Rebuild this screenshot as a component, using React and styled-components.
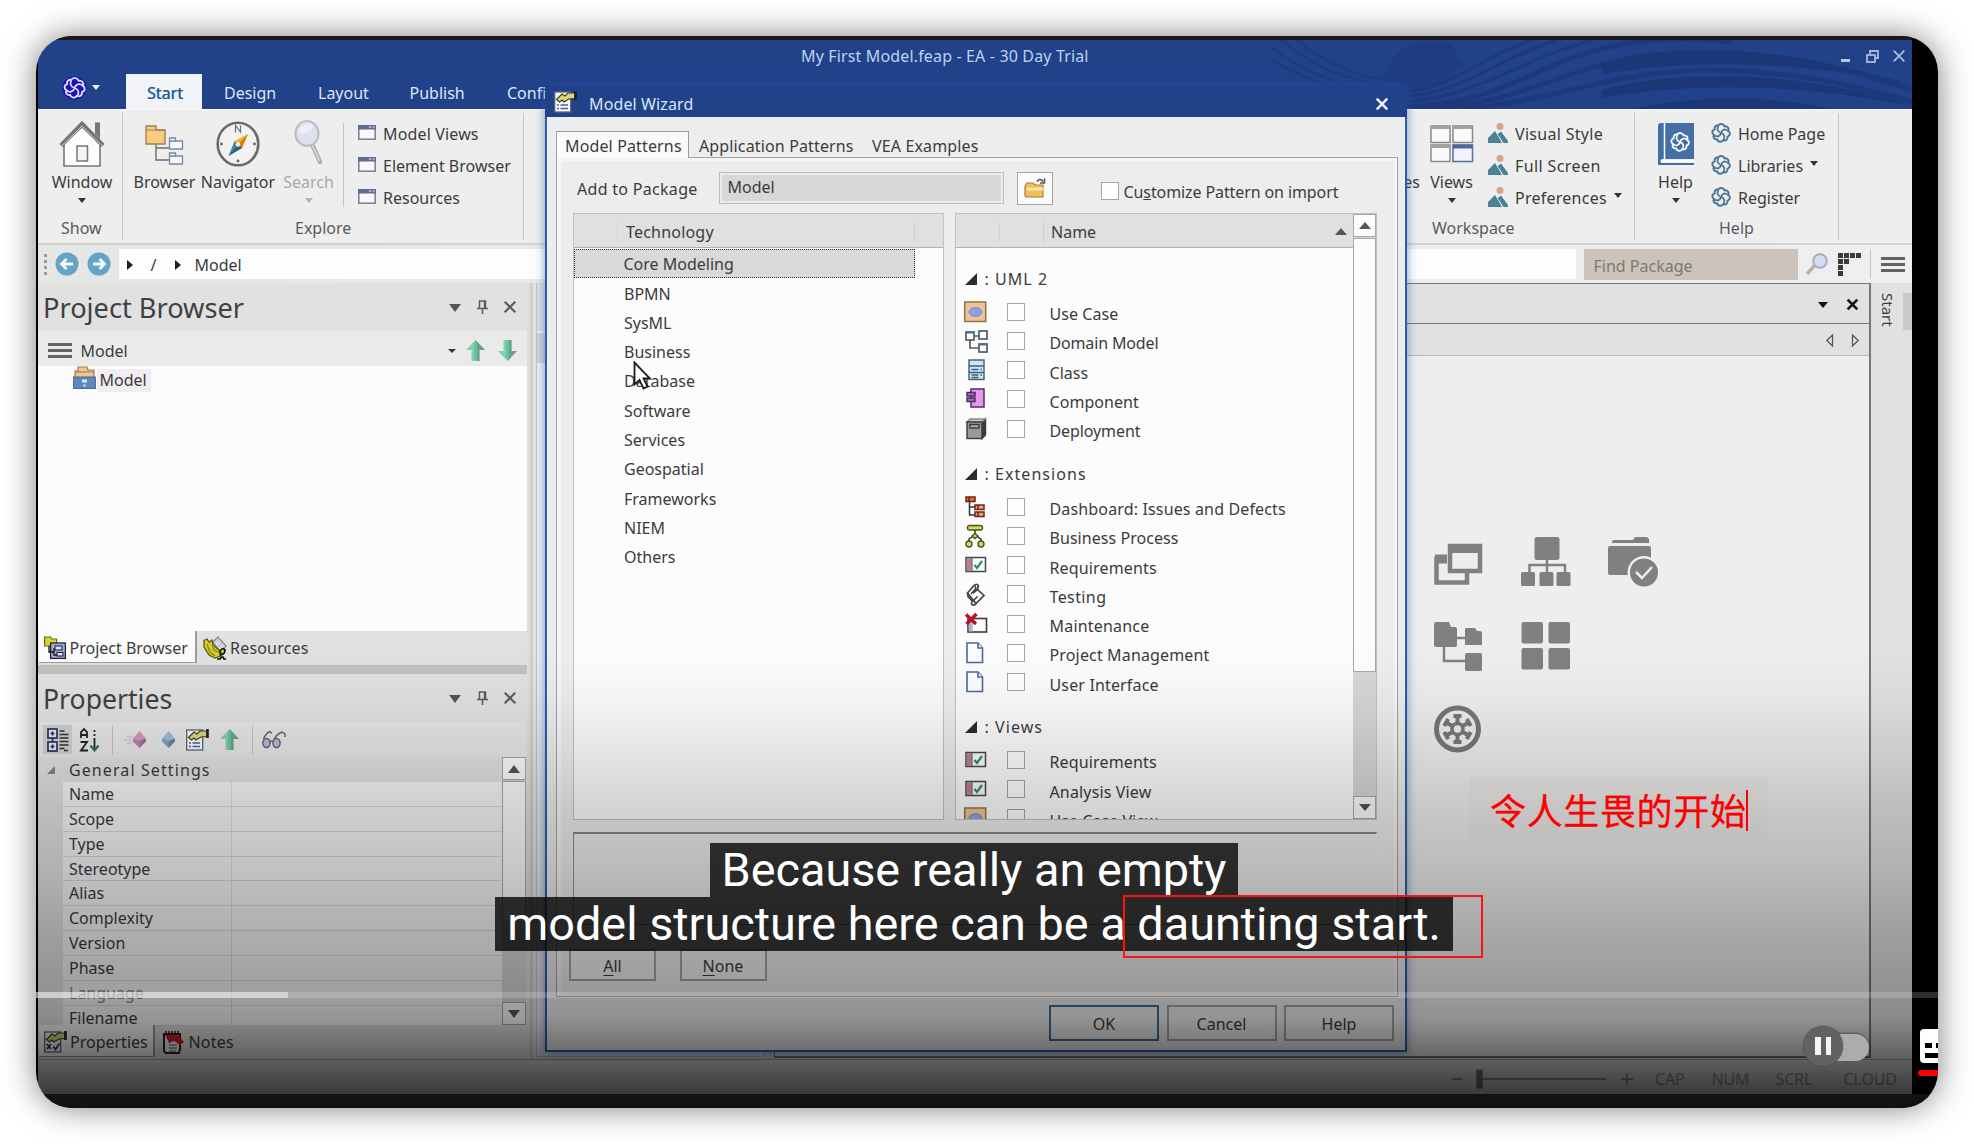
import React from "react";
import styled, { createGlobalStyle } from "styled-components";

const Global = createGlobalStyle`
  * { box-sizing: border-box; }
  html, body { margin: 0; background: #fff; }
  body {
    width: 1974px; height: 1144px; overflow: hidden;
    font-family: "Noto Sans", "Noto Sans CJK SC", sans-serif;
    font-size: 16px; line-height: 24px; color: #3b3b3d;
  }
`;

/* ---------- player frame ---------- */
const Page = styled.div`
  width: 1974px; height: 1144px; padding: 36px; overflow: hidden;
`;
const Shadow = styled.div`
  border-radius: 36px; width: 1902px; height: 1072px;
  box-shadow: 0 0 32px rgba(0, 0, 0, 0.5);
`;
const Player = styled.div`
  position: relative; width: 1902px; height: 1072px; overflow: hidden;
  border-radius: 36px; background: #000; display: flex; flex-direction: column;
`;
const TopStrip = styled.div`height: 4px; flex: none; background: #19191b; margin-right: 26px;`;
const BottomStrip = styled.div`height: 14px; flex: none; background: #121212;`;
const Screen = styled.div`
  position: relative; flex: none; margin-left: 2px; width: 1874px; height: 1054px;
  background: #eee; display: flex; flex-direction: column; overflow: hidden;
`;
const Shade = styled.div`
  position: absolute; left: 0; right: 0; top: 600px; height: 454px; pointer-events: none;
  background: linear-gradient(rgba(0,0,0,0) 0, rgba(0,0,0,0.01) 30px, rgba(0,0,0,0.04) 65px,
    rgba(0,0,0,0.1) 120px, rgba(0,0,0,0.155) 165px, rgba(0,0,0,0.205) 220px, rgba(0,0,0,0.3) 300px,
    rgba(0,0,0,0.36) 360px, rgba(0,0,0,0.39) 378px, rgba(0,0,0,0.47) 396px, rgba(0,0,0,0.61) 425px, rgba(0,0,0,0.75) 454px);
`;

/* ---------- shared bits ---------- */
const Svg = styled.svg`display: block; flex: none; overflow: visible;`;
const Text = styled.span`
  white-space: pre; letter-spacing: ${(p) => p.$ls || 0}px; color: ${(p) => p.$color || "inherit"};
`;
const Tri = styled.i`
  display: block; flex: none; width: 0; height: 0;
  border-left: ${(p) => p.$s || 4}px solid transparent;
  border-right: ${(p) => p.$s || 4}px solid transparent;
  ${(p) => (p.$up ? "border-bottom" : "border-top")}: ${(p) => p.$h || 5}px solid ${(p) => p.$c || "#333"};
  margin-top: ${(p) => p.$mt || 0}px;
`;
const VLine = styled.i`
  display: block; flex: none; width: 1px; height: ${(p) => p.$h}px; background: ${(p) => p.$c || "#c4c4c4"};
  margin: ${(p) => p.$m || 0};
`;
const Gap = styled.i`display: block; flex: ${(p) => (p.$w ? "none" : 1)}; width: ${(p) => p.$w || 0}px;`;
const Burger = styled.i`
  display: block; flex: none; width: 24px; height: 15px;
  background: linear-gradient(#626262 0 3px, transparent 3px 6px, #626262 6px 9px, transparent 9px 12px, #626262 12px);
`;

const Knot = ({ w = 20, h = 20, c = "#4d7296", bg = "none", sw = 2 }) => (
  <Svg width={w} height={h} viewBox="0 0 20 20" preserveAspectRatio="none" fill="none" stroke={c} strokeWidth={sw}>
    {bg !== "none" && <circle cx="10" cy="10" r="10.5" fill={bg} stroke="none" />}
    <path d="M7 2.500C9 .2 12.600.6 13.600 3.400 16.600 3 18.400 5.400 17.300 8 19.800 9.800 19.200 12.800 16.600 13.600 16.800 16.800 14.400 18.200 12.200 17.200 10.200 19.800 7 19 6.200 16.400 3.200 16.800 1.800 14.200 3 12 .4 10.200 1 7.200 3.600 6.400 3.200 3.800 4.800 2.200 7 2.500Z" />
    <path d="M10 10C6.500 9 5.500 5.500 7.500 3M10 10C11 6.500 14.500 5.500 17 7.800M10 10C13.500 11 14.500 14.500 12.300 17M10 10C9 13.500 5.500 14.500 3 12.200" strokeWidth={sw * 0.9} />
  </Svg>
);

/* ---------- title bar ---------- */
const Head = styled.div`
  position: relative; height: 69px; flex: none; background: #214189; color: #c9d8f4;
`;
const Waves = styled.svg`position: absolute; right: 0; top: 0;`;
const TitleRow = styled.div`
  position: relative; display: flex; align-items: center; height: 34px; padding: 0 7px 2px 0;
`;
const AppTitle = styled.div`margin-left: 763px; margin-right: auto; color: #bfd2f2; letter-spacing: 0.150px;`;
const WinButtons = styled.div`
  display: flex; gap: 14px; align-items: center;
  & > svg:first-child { margin-right: 2px; }
`;
const TabRow = styled.div`position: relative; display: flex; height: 35px;`;
const LogoButton = styled.div`
  width: 88px; padding: 3px 0 0 25px; display: flex; gap: 6px;
  & > i { margin-top: 8px; }
`;
const RibbonTab = styled.div`
  width: ${(p) => p.$w}px; padding: 7px 0 0 ${(p) => p.$pl}px; color: #dbe6fa; white-space: pre;
  ${(p) => p.$active && "background: #f1f3f6; color: #1e5f9f; text-shadow: 0.3px 0 #1e5f9f;"}
`;

/* ---------- ribbon ---------- */
const Ribbon = styled.div`
  display: flex; height: 136px; flex: none; background: #eeeeee; border-top: 1px solid #fafafa;
  border-bottom: 2px solid #d2d2d2; padding-top: 3px;
`;
const Group = styled.div`
  width: ${(p) => p.$w}px; height: 127px; flex: none; border-right: 1px solid #c6c6c6;
  display: flex; flex-direction: column;
`;
const GroupBody = styled.div`display: flex; height: 103px; padding-left: ${(p) => p.$pl || 0}px;`;
const GroupName = styled.div`
  color: #5a5a5c; line-height: 24px; padding-left: ${(p) => p.$pl}px; white-space: pre;
`;
const Big = styled.div`
  width: ${(p) => p.$w}px; display: flex; flex-direction: column; align-items: center; flex: none;
  color: ${(p) => p.$color || "inherit"};
  & > div { height: 57px; display: flex; align-items: flex-start; padding-top: ${(p) => p.$pt ?? 8}px; }
  & > span { white-space: pre; line-height: 24px; }
  & > i { margin-top: 4px; }
`;
const SmallList = styled.div`
  display: flex; flex-direction: column; padding: 5px 0 0 ${(p) => p.$pl}px;
`;
const Small = styled.div`
  display: flex; height: 32px; align-items: center; gap: ${(p) => p.$gap || 7}px; white-space: pre;
  letter-spacing: ${(p) => p.$ls || 0}px;
  & > svg { margin-top: -3px; }
`;

const House = () => (
  <Svg width="46" height="46" viewBox="0 0 46 46">
    <path d="M5 22V45H41V22L23 6Z" fill="#fdfdfd" stroke="#777" strokeWidth="1.600" />
    <path d="M36 1.500h5V18l-5-5z" fill="#777" />
    <path d="M2 24.500 23 3 44 24.500" fill="none" stroke="#747474" strokeWidth="4.500" />
    <path d="M2 25.500 23 5 44 25.500" fill="none" stroke="#d8d8d8" strokeWidth="0.900" />
    <rect x="18" y="25" width="10.500" height="15" fill="#f4f4f4" stroke="#777" strokeWidth="1.500" />
  </Svg>
);
const BrowserIcon = () => (
  <Svg width="39" height="40" viewBox="0 0 39 40" fill="none">
    <path d="M11 18v17h13M11 23h13" stroke="#6d6d6d" strokeWidth="1.400" />
    <path d="M1 1h10v4h9v14H1z" fill="#fbc980" stroke="#a08050" strokeWidth="1.400" />
    <path d="M1 5h19" stroke="#a08050" />
    <g fill="#f8f9fc" stroke="#7687a5" strokeWidth="1.300">
      <path d="M24.500 13h6v3h7v8h-13z" /><path d="M24.500 28h6v3h7v8h-13z" /><path d="M24.500 16h6M24.500 31h6" />
    </g>
  </Svg>
);
const Compass = () => (
  <Svg width="44" height="46" viewBox="0 0 44 46">
    <ellipse cx="22" cy="23" rx="20.300" ry="21.300" fill="#f2f2f2" stroke="#6a6a6a" strokeWidth="2.600" />
    <path d="M19.500 11.500V4.500L24.500 11V4.500" fill="none" stroke="#6d6d6d" strokeWidth="1.200" />
    <path d="M32 13 18.500 20 26 27z" fill="#f5b32d" /><path d="M32 13 22 23.500 26 27z" fill="#d97b16" />
    <path d="M12.500 35 18.500 20 26 27z" fill="#3f88a0" /><path d="M12.500 35 22 23.500 26 27z" fill="#2c6478" />
    <circle cx="22" cy="23.500" r="2.200" fill="#e8f0f2" />
    <g fill="#666"><circle cx="5.500" cy="23" r="1.400" /><circle cx="38.500" cy="23" r="1.400" /><circle cx="22" cy="40" r="1.400" /></g>
  </Svg>
);
const Magnifier = () => (
  <Svg width="29" height="45" viewBox="0 0 29 45">
    <path d="M18 24 26 42" stroke="#b0b0b2" strokeWidth="4.500" strokeLinecap="round" />
    <path d="M18.500 25.500 25.500 41" stroke="#dedede" strokeWidth="1.500" />
    <ellipse cx="13" cy="13.500" rx="11.500" ry="12.500" fill="#dde1f0" stroke="#bdbdc4" strokeWidth="2.200" />
    <path d="M4 13c2-8 10-11 15-7-2 5-8 8-15 7z" fill="#eef0f9" />
  </Svg>
);
const WinIcon = () => (
  <Svg width="18" height="15" viewBox="0 0 18 15">
    <rect x="0.800" y="0.800" width="16.400" height="13.400" fill="#f9f9fb" stroke="#7a7c82" strokeWidth="1.500" />
    <rect x="0" y="0" width="18" height="4.500" fill="#5f6f92" /><path d="M11 2h2M14.500 2h2" stroke="#fff" />
  </Svg>
);
const ViewsIcon = () => (
  <Svg width="44" height="38" viewBox="0 0 44 38" fill="#fafafa" stroke="#8a8a8a" strokeWidth="1.500">
    <rect x="1" y="1" width="19" height="16.500" /><rect x="23" y="1" width="19.500" height="16.500" />
    <rect x="1" y="20" width="19" height="16.500" /><rect x="23" y="20" width="19.500" height="16.500" fill="#f2f3fc" stroke="#5b6f97" />
    <path d="M1 2.500h19M23 2.500h19.500M1 21.500h19" strokeWidth="3" stroke="#a2a2a2" /><path d="M23 21.500h19.500" strokeWidth="4" stroke="#4c6a9e" />
  </Svg>
);
const PersonIcon = () => (
  <Svg width="20" height="20" viewBox="0 0 20 20">
    <circle cx="12" cy="3.500" r="3.500" fill="#dba282" />
    <path d="M0 20V15L7 8l7 12z" fill="#4c8194" /><path d="M9.500 11 13 8.500 20 18v2h-4.500z" fill="#4c8194" />
  </Svg>
);
const BookIcon = () => (
  <Svg width="36" height="42" viewBox="0 0 36 42">
    <path d="M3 0H36V36H4q-1 0-1 1.200V40h33v2H0V3q0-3 3-3z" fill="#436fa6" />
    <path d="M6.500 0V36M2.500 38H36" stroke="#fff" strokeWidth="1.500" />
    <g transform="translate(12 9)"><Knot w="20" h="20" c="#fff" sw={1.800} /></g>
  </Svg>
);

/* ---------- address bar ---------- */
const Address = styled.div`
  display: flex; align-items: center; height: 38px; flex: none; background: linear-gradient(90deg, #e6e6e6, #efefef);
`;
const Grip = styled.i`
  width: 3px; height: 21px; margin: 0 8px 0 5.500px;
  background: repeating-linear-gradient(#9a9a9a 0 3px, transparent 3px 6px);
`;
const Crumbs = styled.div`
  height: 30px; width: 1457px; background: #fdfdfd; display: flex; align-items: center; margin-left: 8px; padding: 1px 0 0 8px;
`;
const Right = styled.i`
  width: 0; height: 0; border: 5.500px solid transparent; border-left: 6px solid #1e1e1e; border-right: 0;
`;
const Find = styled.div`
  width: 214px; height: 31px; background: #cbc4bb; color: #7d7973; margin-left: 8px; padding: 5px 10px;
`;
const RoundArrow = ({ flip }) => (
  <Svg width="24" height="24" viewBox="0 0 24 24">
    <circle cx="12" cy="12" r="11.500" fill="#65a4c5" />
    <g transform={flip ? "translate(24 0) scale(-1 1)" : undefined}>
      <path d="M18 12H7M11.500 7 6.500 12l5 5" fill="none" stroke="#f2f8fb" strokeWidth="2.800" />
    </g>
  </Svg>
);

/* ---------- panels ---------- */
const Body = styled.div`display: flex; height: 776px; flex: none; background: #e0e0e0;`;
const Side = styled.div`width: 489px; flex: none; display: flex; flex-direction: column; background: #e1e1e1;`;
const PanelHead = styled.div`
  height: ${(p) => p.$h}px; flex: none; display: flex; align-items: center; padding: 0 11px 0 5px; color: #404042;
  & > h2 { font-weight: 400; font-size: ${(p) => p.$fs}px; line-height: 40px; margin: 1px auto 0 0; }
`;
const PanelTools = styled.div`display: flex; align-items: center; gap: 16px;`;
const Bar = styled.div`
  height: 35px; flex: none; background: #eaeaea; display: flex; align-items: center; padding: 4px 10px 0 10px;
`;
const Tree = styled.div`height: 265px; flex: none; background: #fcfcfc; padding-left: 35px; display: flex; align-items: flex-start;`;
const TreeLabel = styled.span`background: #f0eef1; margin: 3px 0 0 1px; padding: 0 4px 0 2.500px; line-height: 23px;`;
const Tabs = styled.div`height: 34px; flex: none; display: flex; padding-left: 1px;`;
const SideTab = styled.div`
  height: 32px; width: ${(p) => p.$w}px; display: flex; align-items: center; gap: ${(p) => p.$gap || 4}px; padding: 2px 0 0 ${(p) => p.$pl || 5}px; white-space: pre;
  ${(p) => p.$active && "background: #fcfcfc; border-right: 2px solid #9b9b9b; border-bottom: 1px solid #9b9b9b;"}
`;
const Splitter = styled.div`height: 9px; flex: none; background: #c1c1c1;`;
const PropBar = styled.div`
  height: 35px; flex: none; background: #e6e6e6; display: flex; align-items: center; padding-left: 5px;
`;
const Slot = styled.div`
  width: ${(p) => p.$w}px; height: 29px; flex: none; display: flex; align-items: center; justify-content: center;
  background: ${(p) => (p.$on ? "#cfcfd2" : "none")};
`;
const Grid = styled.div`height: 268px; flex: none; display: flex; overflow: hidden;`;
const GridRows = styled.div`width: 464px; flex: none; height: 268px; overflow: hidden;`;
const GroupRow = styled.div`height: 25px; display: flex; align-items: center; padding-left: 9px; letter-spacing: 1.100px; gap: 14px;`;
const Prop = styled.div`
  display: grid; grid-template-columns: 169px 1fr; height: 24.850px; margin-left: 25px; background: #f6f6f6;
  border-bottom: 1px solid #dadada; color: ${(p) => (p.$dim ? "#8b8b8b" : "inherit")};
  & > span { padding-left: 6px; border-right: 1px solid #dcdcdc; line-height: 24.500px; }
`;
const Scroll = styled.div`
  width: ${(p) => p.$w}px; flex: none; display: flex; flex-direction: column; background: #d6d6d6;
`;
const ScrollBtn = styled.div`
  height: 23px; flex: none; background: #fcfcfc; border: 1.500px solid #a8a8a8; display: flex; align-items: center; justify-content: center;
`;
const Thumb = styled.div`
  height: ${(p) => p.$h}px; flex: none; margin: 1px 0 auto; background: #fcfcfc; border: 1.500px solid #a8a8a8;
`;

const Pin = () => (
  <Svg width="11" height="14" viewBox="0 0 11 14" fill="none" stroke="#5c5c5c" strokeWidth="1.500">
    <path d="M2.500 8V1h6v7M0 8.500h11M5.500 8.500V14M7.500 1v7" />
  </Svg>
);
const Close = ({ s = 12, c = "#5a5a5a", sw = 2 }) => (
  <Svg width={s} height={s} viewBox="0 0 12 12" stroke={c} strokeWidth={sw}><path d="M.7.700 11.300 11.300M11.300.700.700 11.300" /></Svg>
);
const Arrow = ({ down }) => (
  <Svg width="19" height="21" viewBox="0 0 19 21">
    <g transform={down ? "translate(0 21) scale(1 -1)" : undefined}>
      <path d="M9.500 0 0 10h5.500v11h8V10H19z" fill="#85cfac" /><path d="M9.500 0 19 10h-5.500v11h-3z" fill="#6f9f8a" />
      <path d="M9.500 3v17" stroke="#5fc79a" strokeWidth="3" />
    </g>
  </Svg>
);
const ModelIcon = () => (
  <Svg width="23" height="23" viewBox="0 0 23 23">
    <path d="M2 12V5h3V1h9l1 3h6v8z" fill="#f0c593" stroke="#a3784b" strokeWidth="1.200" /><path d="M2.500 6h18" stroke="#a3784b" />
    <rect x="0.600" y="11" width="21.800" height="11.500" fill="#5d88b7" stroke="#41699a" /><rect x="9" y="13.500" width="5" height="3" fill="#dfe9f4" />
    <circle cx="11.500" cy="19.500" r="1.300" fill="#c8d8ea" />
  </Svg>
);
const ProjIcon = () => (
  <Svg width="22" height="23" viewBox="0 0 22 23">
    <path d="M.6 1h6l1 2h5v7H.6z" fill="#d9d232" stroke="#6d6a15" strokeWidth="1.200" />
    <rect x="6.600" y="7" width="14.800" height="15.400" fill="#a7aed4" stroke="#1f2447" strokeWidth="1.300" />
    <path d="M5 10v6h5M10 12v7h4" fill="none" stroke="#111" strokeWidth="1.300" />
    <rect x="11" y="10" width="7" height="4" fill="#dfe2f5" stroke="#16193a" /><rect x="13" y="16.500" width="6" height="3.500" fill="#dfe2f5" stroke="#16193a" />
  </Svg>
);
const ResIcon = () => (
  <Svg width="24" height="23" viewBox="0 0 24 23">
    <path d="M10 5 15 0l8 9-5 6z" fill="#ececf4" stroke="#77798a" strokeWidth="1.200" /><path d="M12 3l7 9M14 1.500l7 9M17 1l-5 5M20 4l-5 6" stroke="#b0b1c0" />
    <path d="M1 3.500l3-1.500 2 3 3-2 1 5 7 6v5l-5 2-6-3-5-8z" fill="#d5cb2c" stroke="#5e5a12" strokeWidth="1.300" /><path d="M4 7l3 8 5 4M9 7l2 6 6 3" stroke="#8d8718" fill="none" strokeWidth="1.300" />
    <path d="M14 22h3l1-2h2l1 2h2M17 14q3-4 5-1 0 4-4 5z" stroke="#111" strokeWidth="1.700" fill="#d5cb2c" />
  </Svg>
);
const SheetIcon = ({ check }) => (
  <Svg width="23" height="22" viewBox="0 0 23 22">
    <rect x="0.700" y="1" width="16" height="20" fill="#f8f8fa" stroke="#5b6379" strokeWidth="1.300" />
    <path d="M2.500 8.500 8 3 11 5l3-3h7v5.500l-6 .5-5 3-2-2-2.500 2z" fill="#d8d682" stroke="#3c3b1a" strokeWidth="1.100" />
    <path d="M21.500 0v9" stroke="#222" strokeWidth="2.600" />
    {check
      ? <path d="M3 13l4 5M7 13l-4 5M9.500 15.500l2 3 4-6" fill="none" stroke="#26305e" strokeWidth="1.800" />
      : <path d="M3 14h2M6.500 14H14M3 17.500h2M6.500 17.500H14" stroke="#44609b" strokeWidth="1.600" />}
  </Svg>
);
const NotesIcon = () => (
  <Svg width="23" height="23" viewBox="0 0 23 23">
    <path d="M2 3h16v15l-1 4H4l-2-2z" fill="#f6f6f6" stroke="#222" strokeWidth="2" />
    <path d="M4 2.500V0M7 2.500V0M10 2.500V0M13 2.500V0M16 2.500V0" stroke="#222" strokeWidth="1.500" />
    <path d="M3 4h13l6 7-4 3-6-4-5 2z" fill="#d31d22" /><path d="M7 14h8M7 17h8M7 20h7" stroke="#888" strokeWidth="1.300" />
  </Svg>
);
const CatIcon = () => (
  <Svg width="22" height="24" viewBox="0 0 22 24" fill="#e9ebf5" stroke="#2b3357" strokeWidth="1.700">
    <rect x="1" y="1" width="9" height="9" /><rect x="1" y="14" width="9" height="9" /><path d="M5.500 10v4M3.500 5.500h4M5.500 3.500v4M3.500 18.500h4M5.500 16.500v4" />
    <path d="M12.500 3h5M12.500 6.500h9M12.500 10h9M12.500 13.500h9M12.500 17h9M12.500 20.500h5M17 22.500h4" stroke="#333" />
  </Svg>
);
const SortIcon = () => (
  <Svg width="19" height="24" viewBox="0 0 19 24" fill="none" stroke="#222" strokeWidth="1.800">
    <path d="M1 10V4l3-3 3 3v6M1 7h6M.5 14h6.500L1 22.500h7" />
    <path d="M14.500 2v2M14.500 6v2M14.500 10v11" /><path d="M10.500 17.500l4 5 4-5" stroke="#2c7a50" strokeWidth="2.200" />
  </Svg>
);
const Gem = ({ c1, c2, trail }) => (
  <Svg width={trail ? 22 : 13} height="17" viewBox={trail ? "0 0 22 17" : "9 0 13 17"}>
    {trail && <path d="M2 6h7M0 9h8M3 12h6" stroke="#c9bcc6" />}
    <path d="M15.500 0 22 7.500v3L15.500 17 9 10.500v-3z" fill={c1} /><path d="M15.500 10 22 7.500v3L15.500 17z" fill={c2} />
    <path d="M15.500 17v-7L9 7.500v3z" fill={c2} opacity=".5" />
  </Svg>
);
const Glasses = () => (
  <Svg width="24" height="19" viewBox="0 0 24 19" fill="none" stroke="#66647a" strokeWidth="1.500">
    <ellipse cx="4.500" cy="13" rx="3.600" ry="4.500" fill="#b9b6d3" /><ellipse cx="14.500" cy="13" rx="3.600" ry="4.500" fill="#b9b6d3" />
    <path d="M8 12q1.500-2 3 0M1.500 9Q4 3 8 1.500l2 2M12 9Q15 4 20 2l3 2v3" />
  </Svg>
);

const PanelHeader = ({ title, fs }) => (
  <PanelHead $h={48} $fs={fs}>
    <h2>{title}</h2>
    <PanelTools><Tri $s={6.500} $h={8} $c="#555" $mt={1} /><Pin /><Close /></PanelTools>
  </PanelHead>
);

/* ---------- middle and document area ---------- */
const Gutter = styled.div`width: 9px; flex: none; background: linear-gradient(90deg, #dedede 3px, #cfcfcb 3px 6px, #e4e4e4 6px);`;
const Middle = styled.div`
  width: 228px; flex: none; height: 774px; border: 1px solid #c4c4c8; border-top: 0;
  background: linear-gradient(#dedee3 0 48px, #f4f4f4 48px 50px, #d2d2d8 50px 80px, #eeeef3 80px);
`;
const Doc = styled.div`
  width: 1097px; flex: none; margin-left: 10px; height: 775px; border: solid #777; background: #eeeeee;
  border-width: 1.500px 2px 2px 1px;
`;
const DocBar = styled.div`
  height: ${(p) => p.$h}px; background: #e1e1e1; border-bottom: 1px solid ${(p) => p.$c}; display: flex; align-items: center; justify-content: flex-end;
  gap: 19px; padding: 2px ${(p) => p.$pr}px 0 0;
`;
const IconGrid = styled.div`
  display: grid; grid-template-columns: 87.500px 87.500px 60px; grid-template-rows: 83px 83px 60px; justify-items: start;
  margin: 180.500px 0 0 658px;
`;
const Strip = styled.div`width: 41px; flex: none; background: #e1e1e1; display: flex; justify-content: space-between;`;
const Upright = styled.span`writing-mode: vertical-rl; margin: 10px 0 0 5px; line-height: 24px; font-size: 15px;`;
const Nub = styled.i`width: 9px; height: 37px; margin-top: 10px; background: #cacaca;`;
const Status = styled.div`
  height: 36px; flex: none; background: #e4e4e4; border-top: 1.500px solid #a8a8a8; display: flex; align-items: center; color: #969696;
  padding: 2px 0 0 1414px;
`;
const StatusText = styled.span`width: ${(p) => p.$w}px; flex: none; letter-spacing: -0.150px;`;

/* ---------- dialog ---------- */
const Dialog = styled.div`
  position: absolute; left: 507px; top: 44px; width: 862px; height: 968px; background: #ededed;
  border: 2px solid #2a5ea8; border-top: 0; box-shadow: 0 1px 9px rgba(38, 84, 170, 0.6); display: flex; flex-direction: column;
`;
const DialogTitle = styled.div`
  height: 33px; flex: none; margin: 0 -2px; background: #214189; border-top: 1px solid #1d4798; display: flex; align-items: center;
  padding: 6px 19px 0 9px; color: #d9e5fb;
  & > span { margin: 0 auto 0 12px; letter-spacing: 0.120px; } & > svg:first-child { margin-top: -5px; } & > svg:last-child { margin-top: -1px; }
`;
const DialogTabs = styled.div`display: flex; margin: 14px 0 -1px 9px; height: 27px; position: relative; flex: none;`;
const DialogTab = styled.div`
  width: ${(p) => p.$w}px; padding: ${(p) => (p.$active ? "2px 0 0 8px" : "3px 0 0 10px")}; white-space: pre; letter-spacing: 0.140px;
  ${(p) => p.$active && "background: #fafafa; border: 1px solid #9c9c9c; border-bottom: 0; box-shadow: inset 3px 0 #fff;"}
`;
const TabPanel = styled.div`
  margin: 0 7px 0 9px; height: 840px; flex: none; border: 1.500px solid #a2a2a2; box-shadow: inset 4px 0 #f6f6f6, inset -3px 3px #f5f5f5;
`;
const FormRow = styled.div`display: flex; align-items: center; height: 55px; padding: 5px 0 0 19px;`;
const PackageLabel = styled.span`width: 142.500px; padding: 2px 0 0 1px; letter-spacing: 0.300px;`;
const Input = styled.div`
  width: 285px; height: 32px; border: 1.500px solid #bbb; padding: 2px; & > div { background: #d7d7d7; height: 100%; line-height: 24px; padding-left: 6px; }
`;
const FolderBtn = styled.div`
  width: 36px; height: 33px; margin: 0 48px 0 13px; border: 1.500px solid #a5a5a5; background: #fbfbfb; display: flex; align-items: center; justify-content: center;
`;
const Check = styled.i`
  display: block; width: 18px; height: 18px; flex: none; border: 1.500px solid #a6a6a6; background: #fefefe; margin: ${(p) => p.$m || 0};
`;
const CheckLabel = styled.span`white-space: pre; padding-top: 7px; letter-spacing: -0.100px;`;
const Lists = styled.div`display: flex; gap: 11px; height: 607px; margin-left: 16px;`;
const List = styled.div`
  width: ${(p) => p.$w}px; flex: none; height: 607px; border: 1.500px solid #c2c2c2; background: #fcfcfc; overflow: hidden; display: flex;
`;
const Col = styled.div`flex: 1; min-width: 0; display: flex; flex-direction: column; overflow: hidden;`;
const ListHead = styled.div`
  height: 34px; flex: none; background: #e0e0e0; border-bottom: 1.500px solid #b0b0b0; display: flex; align-items: center; padding-top: 3px;
`;
const TechRow = styled.div`
  height: ${(p) => (p.$on ? 29 : 29.300)}px; flex: none; padding-left: 50px; line-height: 29px;
  ${(p) => p.$on && "width: 341px; background: #d9d9d9; border: 1.5px dotted #333; line-height: 28px; padding-left: 48.5px; margin: 1px 0 1.5px;"}
`;
const Section = styled.div`
  height: 48.600px; flex: none; display: flex; align-items: center; padding: 8px 0 0 8.500px; gap: 8px; letter-spacing: 1.050px;
`;
const Pattern = styled.div`
  height: 29.250px; flex: none; display: grid; grid-template-columns: 42.500px 43px 1fr; align-items: center; padding-left: 8px; white-space: pre;
  letter-spacing: ${(p) => p.$ls || 0.050}px;
  & > svg { margin-top: -5px; margin-left: 1px; } & > i { margin-top: -5px; }
`;
const Notes = styled.div`
  height: 93px; width: 804px; margin: 12px 0 0 16px; border: 1.500px solid #8f8f8f; border-right-color: #f2f2f2; border-top: 2px solid #858585;
`;
const ButtonRow = styled.div`display: flex; gap: ${(p) => p.$gap}px; justify-content: ${(p) => p.$j || "flex-start"}; margin: ${(p) => p.$m};`;
const Button = styled.div`
  width: ${(p) => p.$w}px; height: ${(p) => p.$h}px; border: ${(p) => (p.$primary ? "2px solid #3a6f94" : "2px solid #a3a3a3")}; background: #f0f0f0;
  display: flex; align-items: center; justify-content: center; flex: none; white-space: pre; padding-top: 2px;
  & u { text-underline-offset: 3px; }
`;
const Cursor = styled.svg`position: absolute; left: 595px; top: 321px;`;

const patternIcons = {
  usecase: <><rect x="-0.300" y="1" width="21" height="19.500" fill="#efc495" stroke="#8f7446" strokeWidth="1.500" /><ellipse cx="10.500" cy="11" rx="6.500" ry="4.300" fill="#8fa0e6" stroke="#7488c4" /></>,
  domain: <g fill="#fff" stroke="#555d66" strokeWidth="1.700"><path d="M5 9v9h9M8 6h6" fill="none" /><rect x="1" y="2" width="8" height="8" /><rect x="14" y="1" width="8" height="8" /><rect x="14" y="14" width="8" height="8" /><path d="M1 2.500h8M14 14.500h8" stroke="#4f6f97" strokeWidth="2" /></g>,
  class: <g fill="#cfe6f0" stroke="#3f6076" strokeWidth="1.400"><rect x="4" y="1" width="15" height="19.500" /><path d="M4 7h15M4 13.500h15M6.500 10.500h7M6.500 16h7M6.500 18.500h7M15.500 10.500h1.500M15.500 16h1.500" /></g>,
  component: <g fill="#ea96ee" stroke="#4b2f66" strokeWidth="1.500"><rect x="6" y="1" width="13" height="18" /><rect x="2" y="4.500" width="8" height="3.500" fill="#9d6fc4" /><rect x="2" y="10" width="8" height="3.500" fill="#9d6fc4" /></g>,
  deploy: <g stroke="#3a3a3a" strokeWidth="1.400"><path d="M17 4 20.500 1v16L17 20.500z" fill="#3a3a3a" /><path d="M2 4 5 1h15L17 4z" fill="#c9c9c9" stroke="#888" /><rect x="2" y="4" width="15" height="16.500" fill="#9a9a9a" /><rect x="5" y="6.500" width="9" height="3.500" fill="#aaa" /></g>,
  dash: <g fill="#f4a080" stroke="#6b2413" strokeWidth="1.500"><path d="M4.500 6v13H11M4.500 11H11" fill="none" stroke="#333" /><rect x="1" y="1" width="9" height="4.500" fill="#f26a2c" /><rect x="10" y="9" width="9" height="4.500" /><rect x="10" y="16" width="9" height="4.500" /><path d="M4 1v4.500M13 9v4.500M13 16v4.500" /></g>,
  business: <g fill="#ccdc4c" stroke="#4e541d" strokeWidth="1.400"><path d="M10 5v5M10 10 4 14v3M10 10l6 4v3" fill="none" stroke="#222" /><rect x="2.500" y="0.500" width="15" height="4.500" rx="2" /><circle cx="4" cy="19" r="3" /><circle cx="16" cy="19" r="3" /><path d="M10 8.500l3 2.500-3 2.500L7 11z" /></g>,
  req: <><rect x="1" y="3.500" width="19.500" height="14" fill="#fafafa" stroke="#474747" strokeWidth="1.500" /><rect x="1.800" y="4.200" width="5" height="12.600" fill="#bf7b9b" /><path d="M7 4v13" stroke="#555" /><path d="M9.500 11l2.500 3 5-7" fill="none" stroke="#2c8a72" strokeWidth="2.200" /></>,
  test: <g fill="#fcfcfc" stroke="#444" strokeWidth="1.700"><path d="M2.500 10 9 2.500q2.500-2.500 4.500 0l-1 4 6.500 6-8 8z" /><path d="M9 2.500Q12 4 10 6.500L6 11M12.500 6.500 8 10M2.500 10 3 13.500 8 19 M11 20.500q-1 2-3.500 1.500-2-1.500 0-3.500l5-5" fill="none" /></g>,
  maint: <><rect x="3" y="5.500" width="18.500" height="13.500" fill="#fcfcfc" stroke="#3c3c3c" strokeWidth="1.600" /><rect x="3.700" y="8" width="4" height="10.500" fill="#a5b9d6" /><path d="M1 1.500 11 11M11.500 1 1.500 11" stroke="#b81222" strokeWidth="3.400" /></>,
  doc: <g fill="#fdfdfd" stroke="#4a679b" strokeWidth="1.600"><path d="M2 1h11l4.500 5v14.500H2z" /><path d="M13 1v5h4.500" /></g>,
};
const PIcon = ({ name }) => <Svg width="22" height="22" viewBox="0 0 22 22">{patternIcons[name]}</Svg>;

const technologies = ["Core Modeling", "BPMN", "SysML", "Business", "Database", "Software", "Services", "Geospatial", "Frameworks", "NIEM", "Others"];
const sections = [
  ["UML 2", [["usecase", "Use Case"], ["domain", "Domain Model", -0.15], ["class", "Class"], ["component", "Component"], ["deploy", "Deployment", -0.1]]],
  ["Extensions", [["dash", "Dashboard: Issues and Defects", 0.15], ["business", "Business Process"], ["req", "Requirements", 0.15], ["test", "Testing", 0.4], ["maint", "Maintenance", 0.2], ["doc", "Project Management", 0.15], ["doc", "User Interface", 0.15]]],
  ["Views", [["req", "Requirements", 0.15], ["req", "Analysis View", 0.15], ["usecase", "Use Case View"]]],
];
const properties = ["Name", "Scope", "Type", "Stereotype", "Alias", "Complexity", "Version", "Phase", "Language", "Filename"];

const Fold = ({ s = 12, c = "#2c2c2c" }) => <Svg width={s} height={s} viewBox="0 0 12 12"><path d="M12 0v12H0z" fill={c} /></Svg>;

/* ---------- player overlays ---------- */
const Progress = styled.div`
  position: absolute; left: 0; right: 0; top: 956px; height: 6px; background: rgba(255, 255, 255, 0.18);
  & > i { display: block; width: 252px; height: 6px; background: rgba(255, 255, 255, 0.45); }
`;
const Captions = styled.div`
  position: absolute; left: 459px; top: 807px; width: 958px; display: flex; flex-direction: column; align-items: center;
`;
const Caption = styled.div`
  height: 54px; line-height: 54px; background: rgba(8, 8, 8, 0.81); color: #fff; font-family: Roboto, sans-serif;
  font-size: 46.800px; width: ${(p) => p.$w}px; text-align: center; white-space: pre;
`;
const RedBox = styled.div`position: absolute; left: 1087px; top: 859px; width: 360px; height: 63px; border: 2px solid #f91414;`;
const RedNote = styled.div`
  position: absolute; left: 1434px; top: 741px; width: 297px; height: 68px; background: rgba(190, 170, 140, 0.08);
  display: flex; align-items: center; padding: 0 0 4px 20px; color: #fe0000; font: 400 36px/54px "Noto Sans CJK SC", sans-serif;
  letter-spacing: 0.650px; white-space: pre; -webkit-text-stroke: 0.300px #fe0000;
  & > i { width: 2px; height: 41px; background: #fe0000; margin-left: -1px; margin-top: 3px; }
`;
const Toggle = styled.div`
  position: absolute; left: 1767px; top: 990px; width: 68px; height: 40px; display: flex; align-items: center;
  &::before { content: ""; position: absolute; left: 20px; top: 7.500px; width: 46px; height: 27px; border-radius: 14px; background: #acacac; box-shadow: 0 -1px 2px rgba(0,0,0,0.4); }
`;
const Pause = styled.div`
  position: relative; width: 40px; height: 40px; border-radius: 50%; background: #626262; box-shadow: 0 0 1px #333;
  display: flex; gap: 5px; align-items: center; justify-content: center;
  & > i { width: 5.500px; height: 18px; background: #f4f4f4; }
`;
const CC = styled.svg`position: absolute; left: 1882px; top: 993px;`;

export default function App() {
  return (
    <>
      <Global />
      <Page>
        <Shadow>
          <Player>
            <TopStrip />
            <Screen>
              <Head>
                <Waves width="640" height="69" viewBox="0 0 640 69" fill="none" stroke="#1d397b">
                  <path d="M110 50C112 24 126 14 130 10 138 0 160 0 176 3 186 8 184 20 194 26 186 32 180 28 176 40 160 44 140 50 110 50Z" fill="#1f3c80" stroke="none" />
                  <g strokeWidth="1.500"><path d="M0 8Q50 45 110 52M10 0Q55 40 120 46M25 0Q60 30 110 40M0 20Q40 45 90 52" /></g>
                  <g strokeWidth="3">
                    <path d="M120 52C180 52 200 20 260 0M120 57C190 57 220 20 285 0M120 62C200 62 240 22 320 0" />
                  </g>
                  <g strokeWidth="5">
                    <path d="M130 67C230 66 260 22 350 4 390-3 430-2 460 2M150 70C260 62 290 26 380 15 470 6 560 22 640 50M190 70C290 58 330 36 410 31 500 27 570 42 640 62" />
                  </g>
                  <g fill="#1c3778" stroke="none">
                    <path d="M330 24C420 0 520 10 640 45 540 22 430 18 330 34Z" /><path d="M330 50C420 26 540 34 640 66 540 46 430 40 330 58Z" />
                    <path d="M360 69C420 55 500 55 560 69Z" />
                  </g>
                </Waves>
                <TitleRow>
                  <AppTitle>My First Model.feap - EA - 30 Day Trial</AppTitle>
                  <WinButtons>
                    <Svg width="9" height="12" viewBox="0 0 9 12"><rect y="9" width="9" height="3" fill="#b6c6e6" /></Svg>
                    <Svg width="13" height="13" viewBox="0 0 13 13" fill="none" stroke="#a9bade" strokeWidth="1.800"><path d="M4 4V1h8v7H9" /><rect x="1" y="5" width="8" height="7" /></Svg>
                    <Close c="#a9bade" sw={1.800} />
                  </WinButtons>
                </TitleRow>
                <TabRow>
                  <LogoButton><Knot w="23" h="22" c="#dcdcff" bg="#1c12b4" sw={1.700} /><Tri $c="#e8eefc" $h={5} /></LogoButton>
                  <RibbonTab $w={76} $pl={21} $active>Start</RibbonTab>
                  <RibbonTab $w={94} $pl={22}>Design</RibbonTab>
                  <RibbonTab $w={92} $pl={22}>Layout</RibbonTab>
                  <RibbonTab $w={97} $pl={21.500}>Publish</RibbonTab>
                  <RibbonTab $w={90} $pl={22}>Configure</RibbonTab>
                </TabRow>
              </Head>

              <Ribbon>
                <Group $w={85}>
                  <GroupBody $pl={2}><Big $w={84}><div><House /></div><span>Window</span><Tri /></Big></GroupBody>
                  <GroupName $pl={23}>Show</GroupName>
                </Group>
                <Group $w={401}>
                  <GroupBody $pl={8}>
                    <Big $w={67} $pt={12}><div><BrowserIcon /></div><span>Browser</span></Big>
                    <Big $w={80}><div><Compass /></div><span>Navigator</span></Big>
                    <Big $w={61} $color="#a9a9a9" $pt={7}><div><Magnifier /></div><span>Search</span><Tri $c="#b3b3b3" /></Big>
                    <VLine $h={84} $m="10px 0 0 4px" />
                    <SmallList $pl={14}>
                      <Small $ls={0.150}><WinIcon />Model Views</Small>
                      <Small><WinIcon />Element Browser</Small>
                      <Small><WinIcon />Resources</Small>
                    </SmallList>
                  </GroupBody>
                  <GroupName $pl={172}>Explore</GroupName>
                </Group>
                <Group $w={1111}>
                  <GroupBody $pl={866}>
                    <Big $w={39}><div /><span> es</span></Big>
                    <Big $w={45} $pt={12}><div><ViewsIcon /></div><span>Views</span><Tri /></Big>
                    <SmallList $pl={14}>
                      <Small $ls={0.300}><PersonIcon />Visual Style</Small>
                      <Small $ls={0.400}><PersonIcon />Full Screen</Small>
                      <Small $ls={0.250}><PersonIcon />Preferences<Tri $mt={-5} /></Small>
                    </SmallList>
                  </GroupBody>
                  <GroupName $pl={908}>Workspace</GroupName>
                </Group>
                <Group $w={204}>
                  <GroupBody $pl={22}>
                    <Big $w={37} $pt={10}><div><BookIcon /></div><span>Help</span><Tri /></Big>
                    <SmallList $pl={17}>
                      <Small><Knot />Home Page</Small>
                      <Small><Knot />Libraries<Tri $mt={-5} /></Small>
                      <Small><Knot />Register</Small>
                    </SmallList>
                  </GroupBody>
                  <GroupName $pl={84}>Help</GroupName>
                </Group>
              </Ribbon>

              <Address>
                <Grip />
                <RoundArrow /><Gap $w={8} /><RoundArrow flip />
                <Crumbs>
                  <Right /><Gap $w={18} />/<Gap $w={19} /><Right /><Gap $w={13} />Model
                </Crumbs>
                <Find>Find Package</Find>
                <Gap $w={7} />
                <Svg width="23" height="23" viewBox="0 0 23 23"><path d="M2 21 10 12" stroke="#c0b0a8" strokeWidth="3.500" /><ellipse cx="15" cy="8" rx="6.800" ry="6.800" fill="#d4dcf2" stroke="#a6a8bd" strokeWidth="1.800" /></Svg>
                <Gap $w={10} />
                <Svg width="23" height="23" viewBox="0 0 23 23" fill="#3a3a3a"><path d="M0 0h5v5H0zM6 0h5v5H6zM12 0h5v5h-5zM18 0h5v5h-5zM0 6h5v5H0zM6 6h5v5H6zM0 12h5v5H0zM0 18h5v5H0z" /></Svg>
                <VLine $h={30} $m="0 10px 0 9px" />
                <Burger />
              </Address>

              <Body>
                <Side>
                  <PanelHeader title="Project Browser" fs={27.200} />
                  <Bar>
                    <Burger /><Gap $w={8.500} />Model
                    <Gap />
                    <Tri $h={4} /><Gap $w={10} /><Arrow /><Gap $w={13} /><Arrow down />
                  </Bar>
                  <Tree><ModelIcon /><TreeLabel>Model</TreeLabel></Tree>
                  <Tabs>
                    <SideTab $w={158} $active $gap={3.500}><ProjIcon />Project Browser</SideTab>
                    <SideTab $w={150} $pl={6} $gap={3}><ResIcon /><Text $ls={0.200}>Resources</Text></SideTab>
                  </Tabs>
                  <Splitter />
                  <PanelHeader title="Properties" fs={26.600} />
                  <PropBar>
                    <Slot $w={29} $on><CatIcon /></Slot>
                    <Slot $w={34}><SortIcon /></Slot>
                    <VLine $h={30} $c="#c2c2c2" $m="0 10px 0 6px" />
                    <Slot $w={24}><Gem c1="#cf96bf" c2="#a66c98" trail /></Slot>
                    <Slot $w={33}><Gap $w={10} /><Gem c1="#9fbad2" c2="#66829d" /></Slot>
                    <Slot $w={35}><SheetIcon /></Slot>
                    <Slot $w={28}><Arrow /></Slot>
                    <VLine $h={30} $c="#c2c2c2" $m="0 7px 0 9px" />
                    <Slot $w={28}><Glasses /></Slot>
                  </PropBar>
                  <Grid>
                    <GridRows>
                      <GroupRow><Fold s={8} c="#858585" />General Settings</GroupRow>
                      {properties.map((p) => <Prop key={p} $dim={p === "Language"}><span>{p}</span></Prop>)}
                    </GridRows>
                    <Scroll $w={24}>
                      <ScrollBtn><Tri $up $s={6.500} $h={8} $c="#555" /></ScrollBtn>
                      <Thumb $h={141} />
                      <ScrollBtn><Tri $s={6.500} $h={8} $c="#555" /></ScrollBtn>
                    </Scroll>
                  </Grid>
                  <Tabs>
                    <SideTab $w={116} $active $gap={3}><SheetIcon check />Properties</SideTab>
                    <SideTab $w={150} $pl={6.500}><NotesIcon /><Text $ls={0.200}>Notes</Text></SideTab>
                  </Tabs>
                </Side>
                <Gutter />
                <Middle />
                <Doc>
                  <DocBar $h={40} $c="#777" $pr={11}><Tri $s={5.500} $h={6.500} $c="#111" /><Close s={11} c="#111" sw={3} /></DocBar>
                  <DocBar $h={32} $c="#b9b9b9" $pr={10}>
                    <Svg width="7" height="13" viewBox="0 0 7 13" fill="none" stroke="#555" strokeWidth="1.300"><path d="M6.500 1v11L.8 6.500z" /></Svg>
                    <Svg width="7" height="13" viewBox="0 0 7 13" fill="none" stroke="#555" strokeWidth="1.300"><path d="M.5 1v11L6.200 6.500z" /></Svg>
                  </DocBar>
                  <IconGrid>
                    <Svg width="50" height="50" viewBox="0 0 50 50" fill="none" stroke="#808080"><path d="M12 22H3.500v23.500H34V36" strokeWidth="4.500" /><path d="M2 22h12" strokeWidth="9" /><rect x="17" y="9" width="30" height="25" strokeWidth="4.500" /><path d="M15 11.500h34" strokeWidth="9" /></Svg>
                    <Svg width="50" height="50" viewBox="0 0 50 50" fill="#808080"><rect x="13.500" width="25" height="23" rx="2.500" /><path d="M26 20v16M8.500 36v-8h35.500V36" fill="none" stroke="#808080" strokeWidth="2.500" /><rect y="35" width="14" height="14" rx="1.500" /><rect x="18.500" y="35" width="14" height="14" rx="1.500" /><rect x="35.500" y="35" width="14" height="14" rx="1.500" /></Svg>
                    <Svg width="50" height="50" viewBox="0 0 50 50" fill="#808080"><path d="M4 5 5 3H25L27 0H39L41 2V6H4ZM2 9H41Q43 9 43 11V38H2Q0 38 0 36V11Q0 9 2 9Z" /><circle cx="36" cy="35.500" r="16.500" fill="#eee" /><circle cx="36" cy="35.500" r="14" /><path d="M28 35l6 6 10-11" fill="none" stroke="#eee" strokeWidth="2.500" /></Svg>
                    <Svg width="50" height="50" viewBox="0 0 50 50" fill="#808080"><path d="M3 2h13l2 5h4q2 0 2 2v16q0 2-2 2H3q-2 0-2-2V4q0-2 2-2zM33 8h9l2 3h3q2 0 2 2v12h-17V9zM34 33h13q2 0 2 2v14q0 2-1 2H34q-2 0-2-2V35q0-2 2-2z" /><path d="M24 18h9M11 26v15h22" fill="none" stroke="#808080" strokeWidth="2.500" /></Svg>
                    <Svg width="50" height="50" viewBox="0 0 50 50" fill="#808080"><rect x="0.500" y="2" width="21.500" height="21.500" rx="2" /><rect x="27.500" y="2" width="21.500" height="21.500" rx="2" /><rect x="0.500" y="28" width="21.500" height="21.500" rx="2" /><rect x="27.500" y="28" width="21.500" height="21.500" rx="2" /></Svg>
                    <i />
                    <Svg width="50" height="50" viewBox="0 0 50 50" fill="none" stroke="#777" strokeWidth="5"><circle cx="24.500" cy="26" r="21" /><circle cx="24.500" cy="26" r="5.500" strokeWidth="3.500" />
                      {[0, 60, 120, 180, 240, 300].map((a) => <path key={a} transform={`rotate(${a} 24.500 26)`} d="M24.500 20.500V12.500M20.500 13h8" strokeWidth="4" />)}
                    </Svg>
                  </IconGrid>
                </Doc>
                <Strip><Upright>Start</Upright><Nub /></Strip>
              </Body>

              <Status>
                <Svg width="203" height="20" viewBox="0 0 203 20" stroke="#969696" strokeWidth="1.800"><path d="M0 10h11M28 10H154M169 10h12M175 4v12" /><path d="M27.500.5v19" stroke="#7a7a7a" strokeWidth="6.500" /></Svg>
                <StatusText $w={56.500}>CAP</StatusText><StatusText $w={64}>NUM</StatusText><StatusText $w={68}>SCRL</StatusText><StatusText $w={60}>CLOUD</StatusText>
              </Status>

              <Dialog>
                <DialogTitle><SheetIcon /><span>Model Wizard</span><Close c="#f2f6ff" sw={2.400} /></DialogTitle>
                <DialogTabs>
                  <DialogTab $w={133} $active>Model Patterns</DialogTab>
                  <DialogTab $w={173}>Application Patterns</DialogTab>
                  <DialogTab $w={130}>VEA Examples</DialogTab>
                </DialogTabs>
                <TabPanel>
                  <FormRow>
                    <PackageLabel>Add to Package</PackageLabel>
                    <Input><div>Model</div></Input>
                    <FolderBtn>
                      <Svg width="22" height="21" viewBox="0 0 22 21"><path d="M1 8 3 5h6l2 2h8v12H3q-2 0-2-2z" fill="#f0bf55" stroke="#a8803a" strokeWidth="1.200" /><path d="M2.500 11h17" stroke="#fbe3a4" strokeWidth="3" /><path d="M13 3.500q3-4 6 0M20.500.5v4.500h-4.500" fill="none" stroke="#555" strokeWidth="1.600" /></Svg>
                    </FolderBtn>
                    <Check $m="5px 5px 0 0" />
                    <CheckLabel>Cu<u>s</u>tomize Pattern on import</CheckLabel>
                  </FormRow>
                  <Lists>
                    <List $w={371}>
                      <Col>
                        <ListHead><VLine $h={20} $c="#d2d2d2" $m="0 8px 0 43px" /><Text $ls={0.200}>Technology</Text><VLine $h={20} $c="#cdcdcd" $m="0 28px 0 auto" /></ListHead>
                        {technologies.map((t, i) => <TechRow key={t} $on={i === 0}>{t}</TechRow>)}
                      </Col>
                    </List>
                    <List $w={422}>
                      <Col>
                        <ListHead><VLine $h={20} $c="#d2d2d2" $m="0 0 0 43px" /><VLine $h={20} $c="#cdcdcd" $m="0 7px 0 43px" />Name<Gap /><Tri $up $s={6.500} $h={7.500} $c="#555" $mt={-1} /><Gap $w={6} /></ListHead>
                        <VLine $h={3} $c="none" />
                        {sections.map(([name, items]) => (
                          <React.Fragment key={name}>
                            <Section><Fold />{": " + name}</Section>
                            {items.map(([icon, label, ls]) => <Pattern key={label} $ls={ls}><PIcon name={icon} /><Check />{label}</Pattern>)}
                          </React.Fragment>
                        ))}
                      </Col>
                      <Scroll $w={23}>
                        <ScrollBtn><Tri $up $s={6.500} $h={7.500} $c="#555" /></ScrollBtn>
                        <Thumb $h={434} />
                        <ScrollBtn><Tri $s={6.500} $h={7.500} $c="#555" /></ScrollBtn>
                      </Scroll>
                    </List>
                  </Lists>
                  <Notes />
                  <ButtonRow $gap={23.500} $m="24px 0 0 12px"><Button $w={87} $h={32}><u>A</u>ll</Button><Button $w={87} $h={32}><u>N</u>one</Button></ButtonRow>
                </TabPanel>
                <ButtonRow $gap={7.500} $j="flex-end" $m="8px 11px 0 0"><Button $w={110} $h={36} $primary>OK</Button><Button $w={110} $h={36}>Cancel</Button><Button $w={110} $h={36}>Help</Button></ButtonRow>
              </Dialog>
              <Cursor width="20" height="30" viewBox="0 0 20 30"><path d="M1.500 1.500v22l5-4.500 4 8.500 4-2-4-8h6.500z" fill="#fff" stroke="#1b1b1b" strokeWidth="1.800" /></Cursor>
              <Shade />
            </Screen>
            <BottomStrip />
            <Progress><i /></Progress>
            <Captions>
              <Caption $w={528}>Because really an empty</Caption>
              <Caption $w={958}>model structure here can be a daunting start.</Caption>
            </Captions>
            <RedBox />
            <RedNote>令人生畏的开始<i /></RedNote>
            <Toggle><Pause><i /><i /></Pause></Toggle>
            <CC width="32" height="50" viewBox="0 0 32 50"><rect x="2" y="0" width="44" height="34" rx="4" fill="#fff" /><path d="M7 14h7v5H7zM18 14h12v5H18zM7 24h30v5H7z" fill="#000" /><rect x="0" y="41" width="46" height="6" rx="3" fill="#f00" /></CC>
          </Player>
        </Shadow>
      </Page>
    </>
  );
}
